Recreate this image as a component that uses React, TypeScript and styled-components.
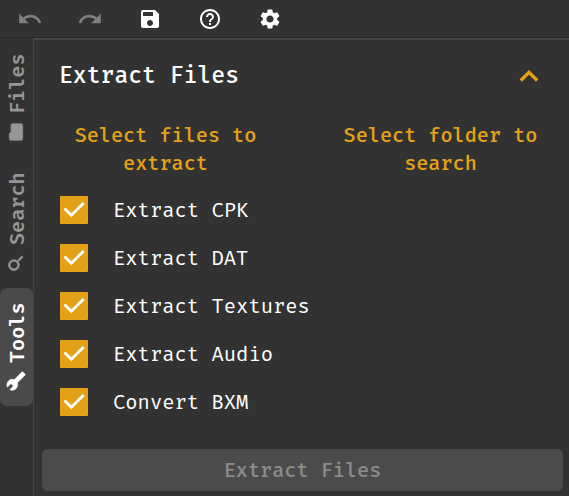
import React from "react";
import styled, { createGlobalStyle } from "styled-components";
import {
  MdUndo,
  MdRedo,
  MdSave,
  MdHelpOutline,
  MdSettings,
  MdFolder,
  MdSearch,
  MdBuild,
} from "react-icons/md";

const Global = createGlobalStyle`
  * { box-sizing: border-box; }
  body { margin: 0; background: #323232; }
  button { font: inherit; border: 0; padding: 0; background: none; }
`;

const Window = styled.div`
  width: 569px;
  height: 496px;
  display: flex;
  flex-direction: column;
  overflow: hidden;
  background: #323232;
  color: #fff;
  font-family: "Fira Code", "DejaVu Sans Mono", monospace;
  font-size: 20px;
  font-variant-ligatures: none;
`;

const Toolbar = styled.header`
  height: 38px;
  flex: none;
  display: flex;
  border-bottom: 1px solid #272727;
`;

const ToolButton = styled.button<{ $muted?: boolean }>`
  width: 60px;
  height: 37px;
  display: flex;
  align-items: center;
  justify-content: center;
  color: ${(p) => (p.$muted ? "#7f7f7f" : "#fff")};
`;

const Body = styled.div`
  flex: 1;
  min-height: 0;
  display: flex;
`;

const Sidebar = styled.nav`
  width: 33px;
  flex: none;
  padding-top: 1px;
  display: flex;
  flex-direction: column;
`;

const Tab = styled.button<{ $active?: boolean; $length: number }>`
  width: 33px;
  height: ${(p) => p.$length}px;
  writing-mode: vertical-rl;
  transform: rotate(180deg);
  display: flex;
  align-items: center;
  padding: 15px 0 0;
  gap: 8px;
  border-radius: 7px;
  font-size: 19.7px;
  line-height: 33px;
  font-weight: 600;
  color: ${(p) => (p.$active ? "#fff" : "#969696")};
  background: ${(p) => (p.$active ? "#4a4a4a" : "transparent")};

  svg {
    flex: none;
    transform: rotate(90deg);
    stroke-width: 0;
  }

  svg path:not([fill="none"]) {
    stroke: currentColor;
    stroke-width: 0.8px;
  }
`;

const TabText = styled.span`
  margin-left: -3px;
`;

const Panel = styled.main`
  flex: 1;
  min-width: 0;
  display: flex;
  flex-direction: column;
  border-left: 1px solid #444;
  border-top: 2px solid #444;
  padding: 0 6px 5px 8px;
`;

const Heading = styled.div`
  height: 71px;
  display: flex;
  align-items: center;
  justify-content: space-between;
  padding: 0 22px 0 17px;
`;

const Title = styled.h1`
  margin: 0;
  font-size: 22.5px;
  font-weight: 500;
  line-height: 30px;
`;

const Pickers = styled.div`
  display: grid;
  grid-template-columns: 233px 233px;
  column-gap: 42px;
  padding: 11px 0 0 7px;
`;

const Picker = styled.button`
  height: 56px;
  padding: 0 15px;
  color: #e4a217;
  font-size: 19.7px;
  font-weight: 500;
  line-height: 28px;
  text-align: center;
`;

const Options = styled.div`
  padding: 8px 0 0 18px;
`;

const Option = styled.label`
  height: 48px;
  display: flex;
  align-items: center;
  gap: 25px;
`;

const OptionText = styled.span`
  padding-top: 1px;
`;

const Box = styled.span`
  width: 28px;
  height: 28px;
  border-radius: 1px;
  background: #e4a217;
`;

const Submit = styled.button`
  margin-top: auto;
  height: 42px;
  padding-top: 1px;
  border-radius: 6px;
  background: #4b4b4b;
  color: #8c8c8c;
  font-size: 19.7px;
  font-weight: 500;
`;

const options = ["Extract CPK", "Extract DAT", "Extract Textures", "Extract Audio", "Convert BXM"];

function Check() {
  return (
    <Box>
      <svg width="28" height="28" viewBox="0 0 28 28" fill="none" stroke="#fff" strokeWidth="2.8">
        <path d="M4.5 12.5 11.3 19.3 23.7 7" />
      </svg>
    </Box>
  );
}

export default function App() {
  return (
    <Window>
      <Global />
      <Toolbar>
        <ToolButton $muted aria-label="Undo"><MdUndo size={26} /></ToolButton>
        <ToolButton $muted aria-label="Redo"><MdRedo size={26} /></ToolButton>
        <ToolButton aria-label="Save"><MdSave size={24} /></ToolButton>
        <ToolButton aria-label="Help"><MdHelpOutline size={24} /></ToolButton>
        <ToolButton aria-label="Settings"><MdSettings size={24} /></ToolButton>
      </Toolbar>
      <Body>
        <Sidebar>
          <Tab $length={118}><MdFolder size={20} /><TabText>Files</TabText></Tab>
          <Tab $length={131}><MdSearch size={20} /><TabText>Search</TabText></Tab>
          <Tab $length={118} $active><MdBuild size={20} /><TabText>Tools</TabText></Tab>
        </Sidebar>
        <Panel>
          <Heading>
            <Title>Extract Files</Title>
            <svg width="24" height="24" viewBox="0 0 24 24" fill="none" stroke="#e4a217" strokeWidth="3.4">
              <path d="M3.8 16.5 12 8.3 20.2 16.5" />
            </svg>
          </Heading>
          <Pickers>
            <Picker>Select files to extract</Picker>
            <Picker>Select folder to search</Picker>
          </Pickers>
          <Options>
            {options.map((name) => (
              <Option key={name}>
                <Check />
                <OptionText>{name}</OptionText>
              </Option>
            ))}
          </Options>
          <Submit>Extract Files</Submit>
        </Panel>
      </Body>
    </Window>
  );
}
